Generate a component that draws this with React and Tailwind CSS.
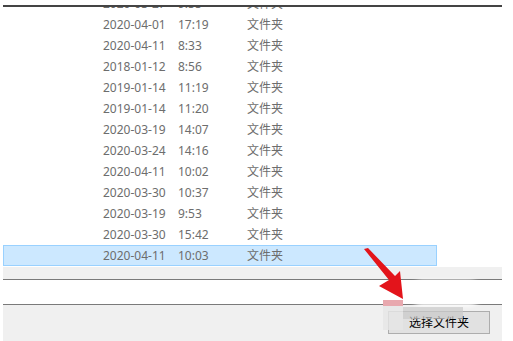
const rows = [
  ["2020-03-27", "9:55"],
  ["2020-04-01", "17:19"],
  ["2020-04-11", "8:33"],
  ["2018-01-12", "8:56"],
  ["2019-01-14", "11:19"],
  ["2019-01-14", "11:20"],
  ["2020-03-19", "14:07"],
  ["2020-03-24", "14:16"],
  ["2020-04-11", "10:02"],
  ["2020-03-30", "10:37"],
  ["2020-03-19", "9:53"],
  ["2020-03-30", "15:42"],
];

const font = { fontFamily: '"Noto Sans", "Noto Sans CJK SC", sans-serif' };

const Row = ({ date, time, selected }) => (
  <div
    className={
      "flex h-[21px] w-[434px] items-center border text-[12px] text-[#6d6d6d] " +
      (selected ? "border-[#99d1ff] bg-[#cce8ff]" : "border-transparent")
    }
  >
    <span className="ml-[99px] w-[75px] leading-none">{date}</span>
    <span className="w-[69px] leading-none">{time}</span>
    <span className="leading-none">文件夹</span>
  </div>
);

export default function App() {
  return (
    <div className="relative h-[341px] w-[513px] overflow-hidden bg-white" style={font}>
      <div className="ml-[3px] flex h-full w-[499px] flex-col">
        <div className="h-[5px] shrink-0" />
        <div className="h-[2px] shrink-0 bg-[#444444]" />
        <div className="h-[260px] shrink-0 overflow-hidden bg-white">
          <div className="mt-[-14px]">
            {rows.map(([d, t], i) => (
              <Row key={i} date={d} time={t} />
            ))}
            <Row date="2020-04-11" time="10:03" selected />
          </div>
        </div>
        <div className="h-[12px] shrink-0 bg-[#f0f0f0]" />
        <div className="h-[1px] shrink-0 bg-[#7a7a7a]" />
        <div className="h-[24px] shrink-0 bg-white" />
        <div className="h-[1px] shrink-0 bg-[#7a7a7a]" />
        <div className="flex flex-1 justify-end bg-[#f0f0f0] pr-[12px] pt-[6px]">
          <button className="flex h-[23px] w-[102px] items-center justify-center border border-[#adadad] bg-[#e1e1e1] text-[12px] text-black">
            选择文件夹
          </button>
        </div>
      </div>

      {/* watermark blur and arrow overlays */}
      <div className="absolute left-[410px] top-[280px] h-[26px] w-[72px] rounded-[14px] bg-white/95 blur-[2px]" />
      <div className="absolute left-[383px] top-[300px] h-[6px] w-[20px] bg-[#e8a8ae]" />
      <div className="absolute left-[383px] top-[306px] h-[24px] w-[20px] bg-[#e6e6e6]/80" />
      <div className="absolute left-[403px] top-[307px] h-[12px] w-[60px] bg-[#c9c9c9]/70" />
      <svg className="absolute left-0 top-0" width="513" height="341" viewBox="0 0 513 341">
        <polygon
          points="364,249 368,248 395,276 400,271 403,299 379,286 389,280"
          fill="#e3141b"
        />
      </svg>
    </div>
  );
}
